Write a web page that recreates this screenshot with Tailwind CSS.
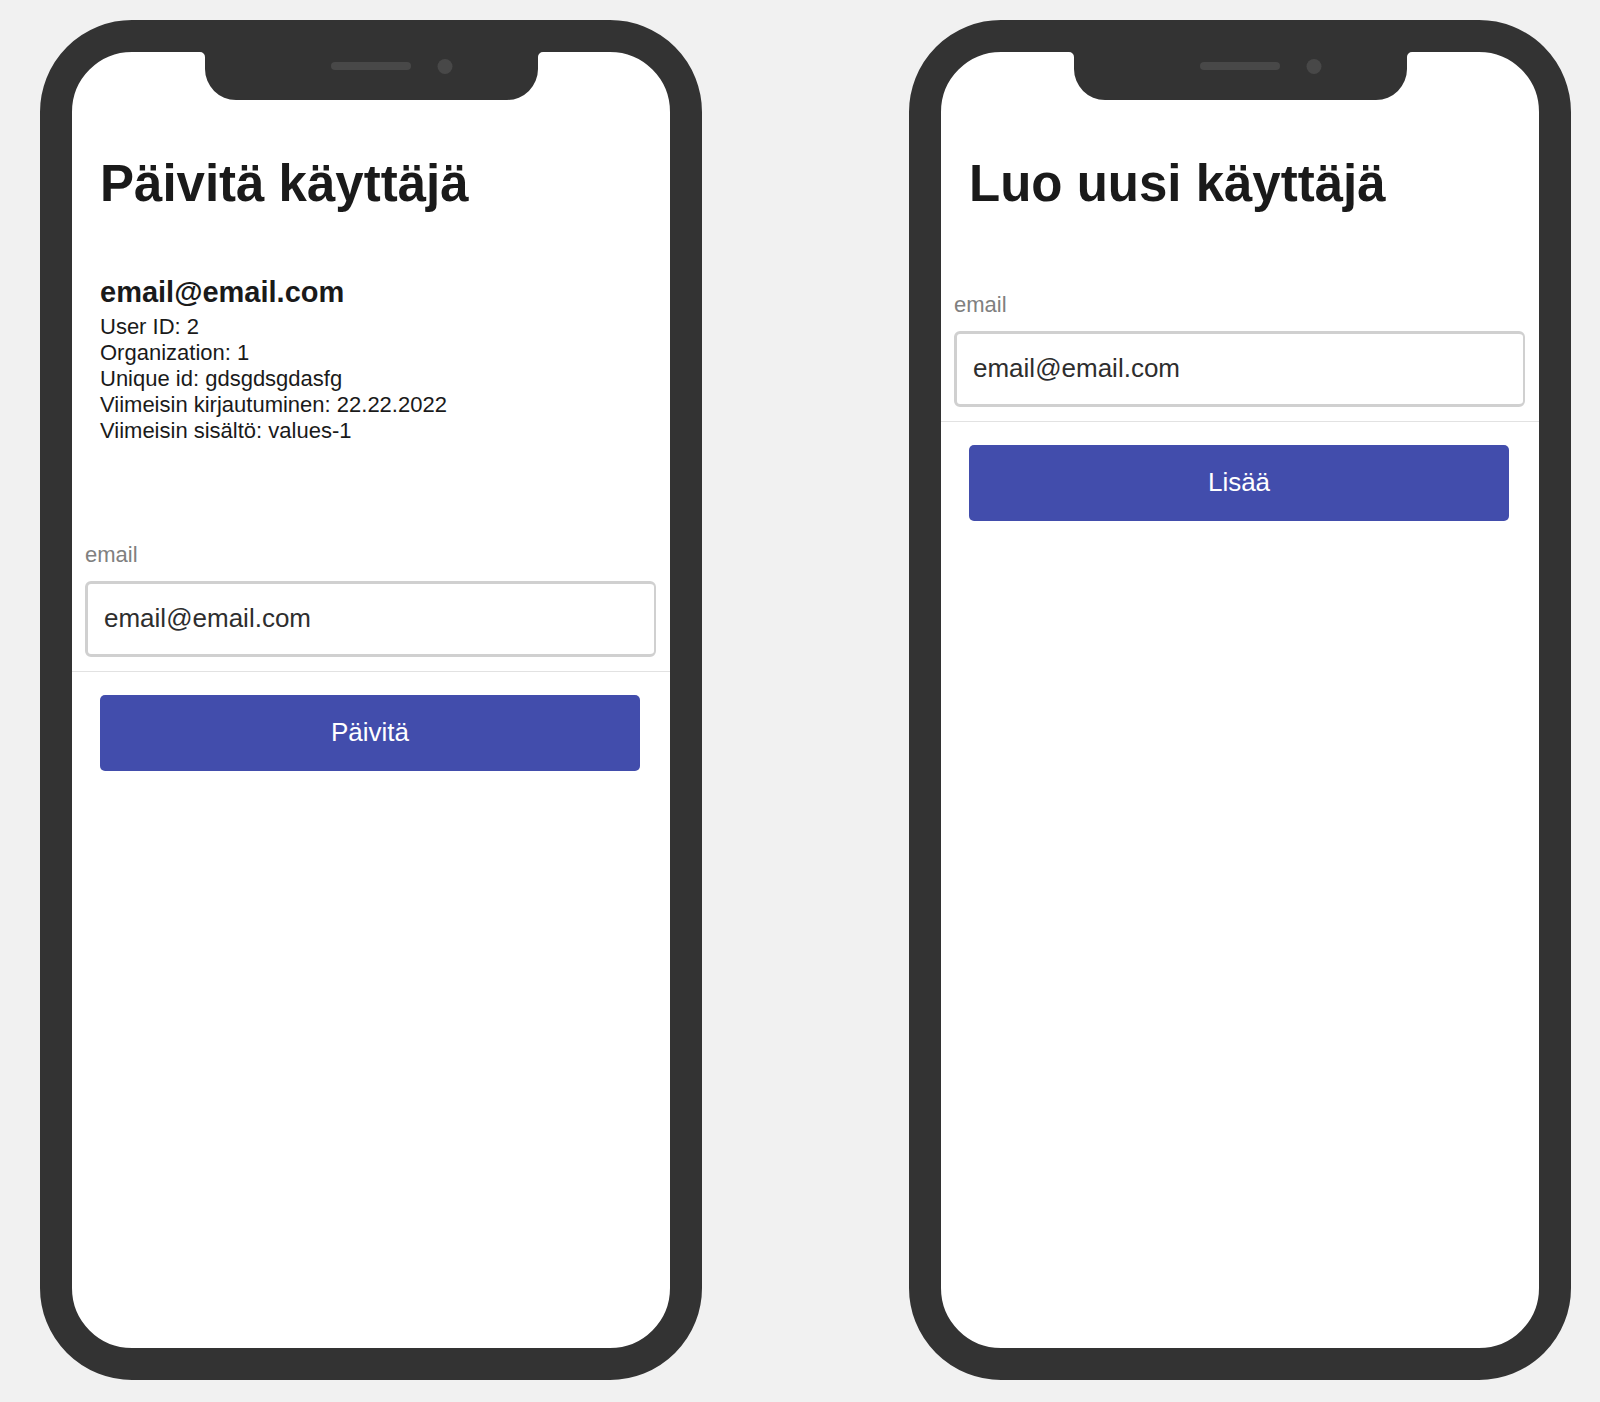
<!DOCTYPE html>
<html lang="fi">
<head>
<meta charset="utf-8">
<meta name="viewport" content="width=device-width, initial-scale=1">
<title>Käyttäjät</title>
<script src="https://cdn.jsdelivr.net/npm/@tailwindcss/browser@4"></script>
</head>
<body class="bg-[#f1f1f1] font-['Liberation_Sans',Arial,sans-serif] text-[#1a1a1a]">
<main class="flex min-h-screen flex-col gap-10 pt-5 pr-[29px] pb-[22px] pl-10 lg:flex-row lg:gap-[207px]">

  <section class="relative min-w-0 flex-1 rounded-[92px] border-[32px] border-[#333] bg-white pt-[102px] pb-16" aria-labelledby="update-title">
    <!-- Notch with speaker and camera -->
    <div class="absolute inset-x-0 -top-px flex justify-center" aria-hidden="true">
      <svg class="h-[49px] w-[343px]" viewBox="0 0 343 49">
        <path fill="#333" d="M0 0V1a5 5 0 0 1 5 5V18a31 31 0 0 0 31 31H307a31 31 0 0 0 31-31V6a5 5 0 0 1 5-5V0Z"/>
        <rect x="131" y="11" width="80" height="8" rx="4" fill="#484848"/>
        <circle cx="245" cy="15.5" r="7.5" fill="#484848"/>
      </svg>
    </div>
    <h1 id="update-title" class="px-7 text-[51px] leading-[60px] font-bold">Päivitä käyttäjä</h1>
    <h2 class="mt-[62px] px-7 text-[29px] leading-8 font-bold">email@email.com</h2>
    <div class="mt-1.5 px-7 text-[22px] leading-[26px]">
      <p>User ID: 2</p>
      <p>Organization: 1</p>
      <p>Unique id: gdsgdsgdasfg</p>
      <p>Viimeisin kirjautuminen: 22.22.2022</p>
      <p>Viimeisin sisältö: values-1</p>
    </div>
    <form class="mt-[98px]">
      <div class="border-b border-[#e2e2e2] pr-[14px] pb-[14px] pl-[13px]">
        <label for="update-email" class="block text-[22px] leading-[26px] text-[#808080]">email</label>
        <input id="update-email" type="email" value="email@email.com" class="mt-[13px] block h-[76px] w-full rounded-md border-3 border-r-2 border-[#d0d0d0] bg-white px-4 pb-0.5 text-[26px] text-[#2e2e2e]">
      </div>
      <div class="pt-[23px] pr-[30px] pl-7">
        <button type="button" class="block h-[76px] w-full rounded-[5px] bg-[#424dac] pb-0.5 text-[26px] text-white">Päivitä</button>
      </div>
    </form>
  </section>

  <section class="relative min-w-0 flex-1 rounded-[92px] border-[32px] border-[#333] bg-white pt-[102px] pb-16" aria-labelledby="create-title">
    <!-- Notch with speaker and camera -->
    <div class="absolute inset-x-0 -top-px flex justify-center" aria-hidden="true">
      <svg class="h-[49px] w-[343px]" viewBox="0 0 343 49">
        <path fill="#333" d="M0 0V1a5 5 0 0 1 5 5V18a31 31 0 0 0 31 31H307a31 31 0 0 0 31-31V6a5 5 0 0 1 5-5V0Z"/>
        <rect x="131" y="11" width="80" height="8" rx="4" fill="#484848"/>
        <circle cx="245" cy="15.5" r="7.5" fill="#484848"/>
      </svg>
    </div>
    <h1 id="create-title" class="px-7 text-[51px] leading-[60px] font-bold">Luo uusi käyttäjä</h1>
    <form class="mt-[78px]">
      <div class="border-b border-[#e2e2e2] pr-[14px] pb-[14px] pl-[13px]">
        <label for="create-email" class="block text-[22px] leading-[26px] text-[#808080]">email</label>
        <input id="create-email" type="email" value="email@email.com" class="mt-[13px] block h-[76px] w-full rounded-md border-3 border-r-2 border-[#d0d0d0] bg-white px-4 pb-0.5 text-[26px] text-[#2e2e2e]">
      </div>
      <div class="pt-[23px] pr-[30px] pl-7">
        <button type="button" class="block h-[76px] w-full rounded-[5px] bg-[#424dac] pb-0.5 text-[26px] text-white">Lisää</button>
      </div>
    </form>
  </section>

</main>
</body>
</html>
